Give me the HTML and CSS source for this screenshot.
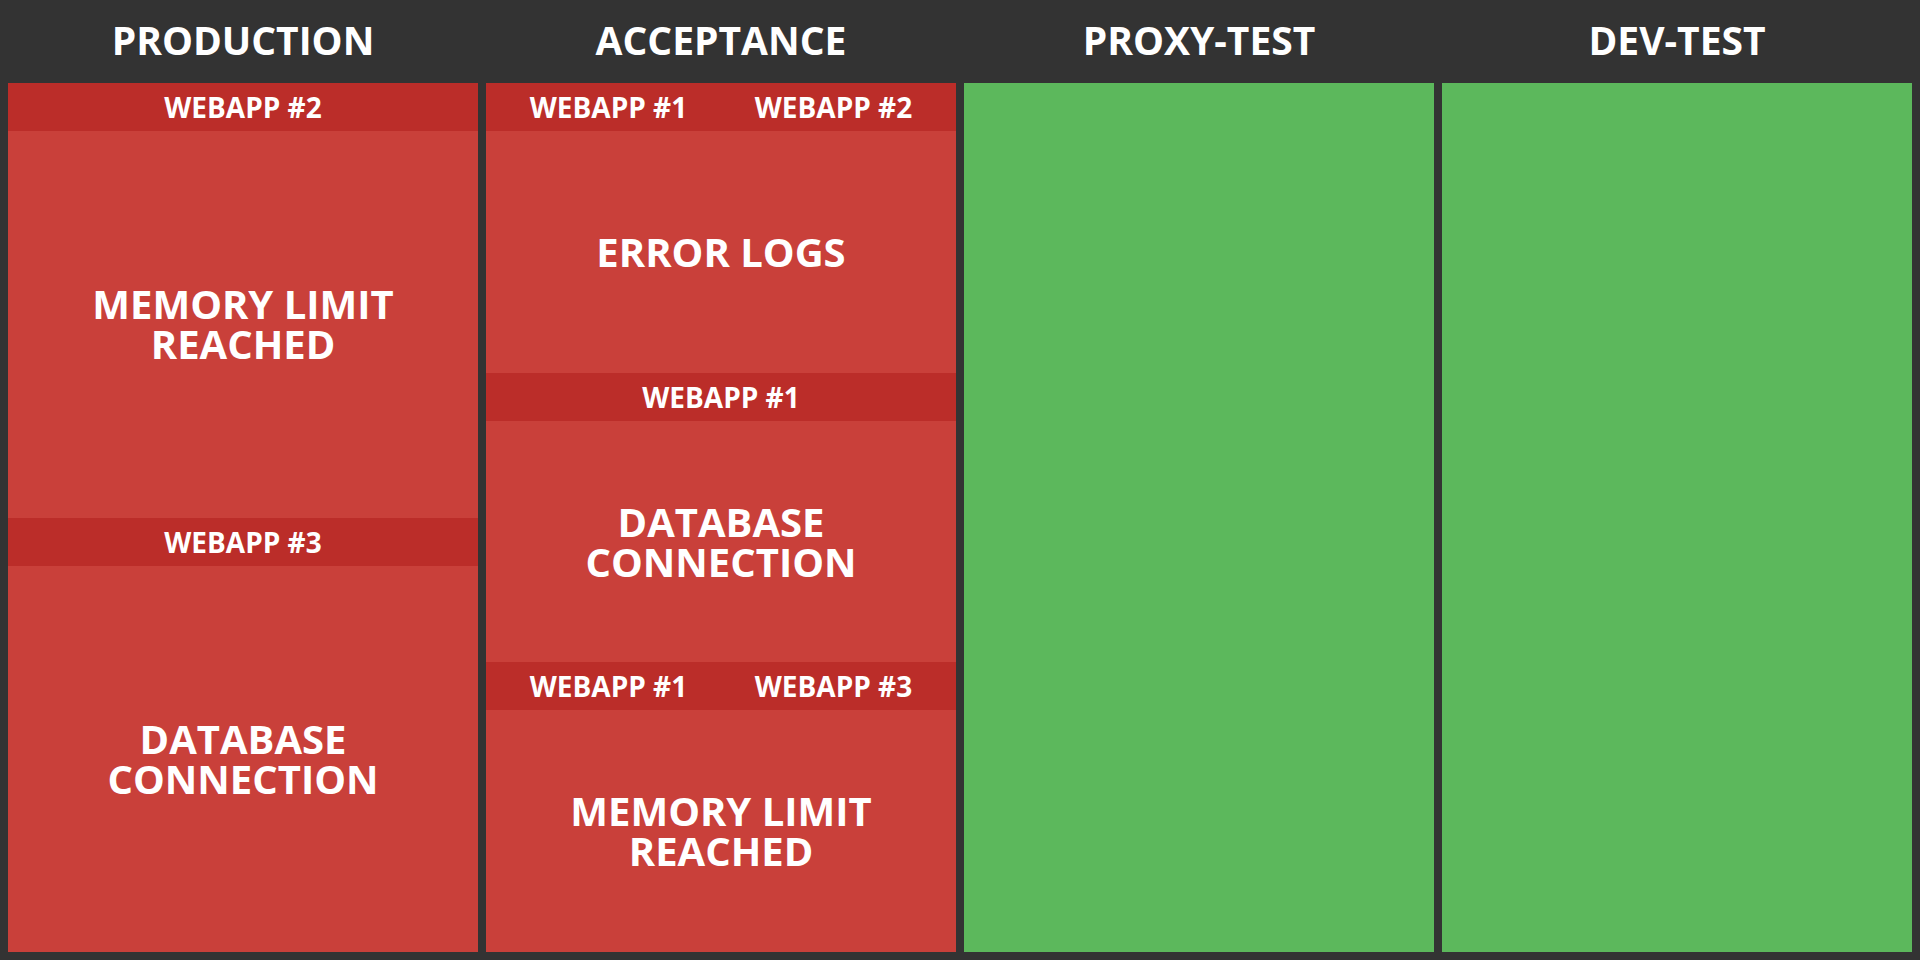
FILE: index.html
```html
<!DOCTYPE html>
<html lang="en">
<head>
<meta charset="utf-8">
<title>Environment status</title>
<link rel="stylesheet" href="styles.css">
</head>
<body>
<main class="board">
  <section class="env">
    <h1 class="env-name">Production</h1>
    <div class="env-body">
      <article class="alert">
        <ul class="apps"><li>webapp #2</li></ul>
        <h2 class="message">Memory limit reached</h2>
      </article>
      <article class="alert">
        <ul class="apps"><li>webapp #3</li></ul>
        <h2 class="message">Database connection</h2>
      </article>
    </div>
  </section>
  <section class="env">
    <h1 class="env-name">Acceptance</h1>
    <div class="env-body">
      <article class="alert">
        <ul class="apps"><li>webapp #1</li><li>webapp #2</li></ul>
        <h2 class="message">Error logs</h2>
      </article>
      <article class="alert">
        <ul class="apps"><li>webapp #1</li></ul>
        <h2 class="message">Database connection</h2>
      </article>
      <article class="alert">
        <ul class="apps"><li>webapp #1</li><li>webapp #3</li></ul>
        <h2 class="message">Memory limit reached</h2>
      </article>
    </div>
  </section>
  <section class="env">
    <h1 class="env-name">Proxy-test</h1>
    <div class="env-body"></div>
  </section>
  <section class="env">
    <h1 class="env-name">Dev-test</h1>
    <div class="env-body"></div>
  </section>
</main>
</body>
</html>
```
FILE: styles.css
```css
* {
  box-sizing: border-box;
}

body {
  margin: 0;
  background: #333;
  color: #fff;
  font-family: "Open Sans", sans-serif;
  font-weight: 700;
  text-align: center;
  text-transform: uppercase;
}

.board {
  display: flex;
  gap: 8px;
  min-height: 100vh;
  padding: 0 8px 8px;
}

.env {
  display: flex;
  flex: 1 1 0;
  flex-direction: column;
}

.env-name {
  margin: 0;
  padding: 20px 0 23px;
  font-size: 39px;
  line-height: 40px;
}

.env-body {
  display: flex;
  flex: 1;
  flex-direction: column;
  background: #5cb85c;
}

.alert {
  display: flex;
  flex: 1 1 0;
  flex-direction: column;
  background: #c9403a;
}

.apps {
  display: flex;
  justify-content: space-around;
  margin: 0;
  padding: 10px;
  background: #bb2d29;
  font-size: 28px;
  line-height: 28px;
  list-style: none;
}

.message {
  display: flex;
  flex: 1;
  align-items: center;
  justify-content: center;
  margin: 0;
  padding: 0 64px;
  font-size: 40px;
  line-height: 40px;
}
```
